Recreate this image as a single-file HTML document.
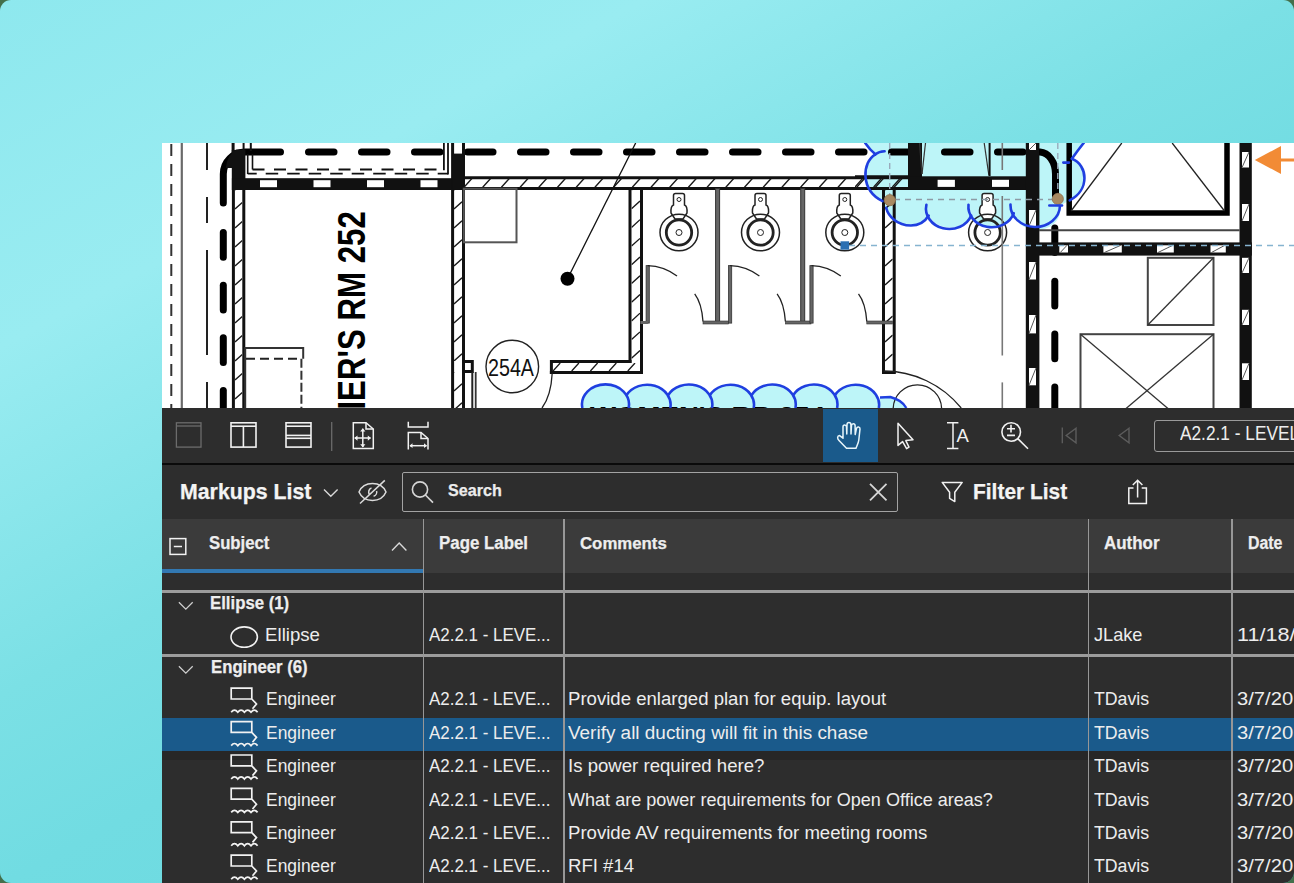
<!DOCTYPE html>
<html><head><meta charset="utf-8">
<style>
html,body{margin:0;padding:0;width:1294px;height:883px;overflow:hidden;background:#436f4b;}
*{box-sizing:border-box;}
body{font-family:"Liberation Sans",sans-serif;color:#f2f2f2;}
#bg{position:absolute;left:0;top:0;width:1294px;height:883px;border-radius:11px;overflow:hidden;
 background:linear-gradient(151.7deg,#8ee8ee 0%,#99ecf1 22%,#7be0e5 44%,#71dce2 56%,#62d5dc 100%);}
.a{position:absolute;}
#draw{left:162px;top:143px;width:1132px;height:265px;background:#fff;overflow:hidden;}
#tb{left:162px;top:408px;width:1132px;height:55px;background:#2d2d2d;}
#tbl{left:162px;top:462.7px;width:1132px;height:2.3px;background:#0a0a0a;}
#panel{left:162px;top:465px;width:1132px;height:418px;background:#2d2d2d;}
.t{position:absolute;white-space:nowrap;line-height:1;}
</style></head><body>
<div id="bg">
<div class="a" id="draw"><svg style="position:absolute;left:-162px;top:-143px" width="1294" height="883" viewBox="0 0 1294 883"><path d="M865.2 143 L1083.7 143 Q1078 150 1071.9 158.8 C1088 165 1090 190 1069.7 200.3 L1060 205.7 A23.3 20.5 0 0 1 1013.8 213.2 A23.3 20.5 0 0 1 971.2 215.5 A23.3 20.5 0 0 1 928.7 215.5 C926 220 921 225.5 910.9 225.5 C897 225.5 886 212 882.5 201.2 C860 190 862 162 875.4 154.3 Z" fill="#bdf5f8"/><rect x="582" y="400" width="300" height="10" fill="#bdf5f8"/><ellipse cx="605.5" cy="404.5" rx="23.5" ry="20" fill="#bdf5f8"/><ellipse cx="647.2" cy="404.5" rx="23.5" ry="20" fill="#bdf5f8"/><ellipse cx="688.9" cy="404.5" rx="23.5" ry="20" fill="#bdf5f8"/><ellipse cx="730.6" cy="404.5" rx="23.5" ry="20" fill="#bdf5f8"/><ellipse cx="772.3" cy="404.5" rx="23.5" ry="20" fill="#bdf5f8"/><ellipse cx="814.0" cy="404.5" rx="23.5" ry="20" fill="#bdf5f8"/><ellipse cx="855.7" cy="404.5" rx="23.5" ry="20" fill="#bdf5f8"/><path d="M880 397.5 L890.3 397 Q902 400 906.3 408 L880 408 Z" fill="#bdf5f8"/><line x1="171.3" y1="143.0" x2="171.3" y2="408.0" stroke="#333" stroke-width="2" stroke-dasharray="12 8" stroke-dashoffset="-1"/><line x1="181.8" y1="143.0" x2="181.8" y2="408.0" stroke="#6a6a6a" stroke-width="2.2" /><line x1="207.0" y1="143.0" x2="207.0" y2="170.0" stroke="#222" stroke-width="2" /><line x1="207.0" y1="197.0" x2="207.0" y2="223.0" stroke="#222" stroke-width="2" /><line x1="207.0" y1="250.0" x2="207.0" y2="355.0" stroke="#222" stroke-width="2" /><line x1="207.0" y1="382.0" x2="207.0" y2="408.0" stroke="#222" stroke-width="2" /><line x1="223.3" y1="232.5" x2="223.3" y2="257.2" stroke="#000" stroke-width="7" stroke-linecap="round"/><line x1="223.3" y1="285.2" x2="223.3" y2="309.9" stroke="#000" stroke-width="7" stroke-linecap="round"/><line x1="223.3" y1="337.8" x2="223.3" y2="362.5" stroke="#000" stroke-width="7" stroke-linecap="round"/><line x1="223.3" y1="390.5" x2="223.3" y2="415.2" stroke="#000" stroke-width="7" stroke-linecap="round"/><path d="M223.3 203 V174 A22 22 0 0 1 245.3 152 H280.5" stroke="#000" stroke-width="7" fill="none" stroke-linecap="round"/><line x1="308.5" y1="152.0" x2="334.0" y2="152.0" stroke="#000" stroke-width="7" stroke-linecap="round"/><line x1="361.5" y1="152.0" x2="387.0" y2="152.0" stroke="#000" stroke-width="7" stroke-linecap="round"/><line x1="414.5" y1="152.0" x2="440.0" y2="152.0" stroke="#000" stroke-width="7" stroke-linecap="round"/><line x1="467.5" y1="152.0" x2="493.0" y2="152.0" stroke="#000" stroke-width="7" stroke-linecap="round"/><line x1="520.5" y1="152.0" x2="546.0" y2="152.0" stroke="#000" stroke-width="7" stroke-linecap="round"/><line x1="573.5" y1="152.0" x2="599.0" y2="152.0" stroke="#000" stroke-width="7" stroke-linecap="round"/><line x1="626.5" y1="152.0" x2="652.0" y2="152.0" stroke="#000" stroke-width="7" stroke-linecap="round"/><line x1="679.5" y1="152.0" x2="705.0" y2="152.0" stroke="#000" stroke-width="7" stroke-linecap="round"/><line x1="732.5" y1="152.0" x2="758.0" y2="152.0" stroke="#000" stroke-width="7" stroke-linecap="round"/><line x1="785.5" y1="152.0" x2="811.0" y2="152.0" stroke="#000" stroke-width="7" stroke-linecap="round"/><line x1="838.5" y1="152.0" x2="864.0" y2="152.0" stroke="#000" stroke-width="7" stroke-linecap="round"/><line x1="891.5" y1="152.0" x2="917.0" y2="152.0" stroke="#000" stroke-width="7" stroke-linecap="round"/><line x1="944.5" y1="152.0" x2="970.0" y2="152.0" stroke="#000" stroke-width="7" stroke-linecap="round"/><line x1="997.5" y1="152.0" x2="1023.0" y2="152.0" stroke="#000" stroke-width="7" stroke-linecap="round"/><rect x="231.9" y="150.0" width="13.5" height="40.0" fill="#111"/><line x1="233.4" y1="150.0" x2="233.4" y2="408.0" stroke="#111" stroke-width="3" /><line x1="243.8" y1="186.0" x2="243.8" y2="408.0" stroke="#111" stroke-width="3" /><clipPath id="h38"><rect x="235.0" y="190.0" width="7.3" height="218.0"/></clipPath><path d="M235.0 190.0 L242.3 183.4 M235.0 209.0 L242.3 202.4 M235.0 228.0 L242.3 221.4 M235.0 247.0 L242.3 240.4 M235.0 266.0 L242.3 259.4 M235.0 285.0 L242.3 278.4 M235.0 304.0 L242.3 297.4 M235.0 323.0 L242.3 316.4 M235.0 342.0 L242.3 335.4 M235.0 361.0 L242.3 354.4 M235.0 380.0 L242.3 373.4 M235.0 399.0 L242.3 392.4" stroke="#1a1a1a" stroke-width="1.35" fill="none" clip-path="url(#h38)"/><rect x="231.9" y="178.2" width="232.0" height="11.8" fill="#111"/><rect x="260.0" y="180.2" width="17.0" height="7.0" fill="#fff"/><rect x="313.5" y="180.2" width="17.0" height="7.0" fill="#fff"/><rect x="367.0" y="180.2" width="17.0" height="7.0" fill="#fff"/><rect x="420.5" y="180.2" width="17.0" height="7.0" fill="#fff"/><line x1="247.7" y1="154.0" x2="247.7" y2="174.0" stroke="#111" stroke-width="1.6" /><line x1="252.5" y1="154.0" x2="252.5" y2="169.5" stroke="#111" stroke-width="1.6" /><line x1="233.1" y1="143.0" x2="233.1" y2="153.0" stroke="#111" stroke-width="3" /><line x1="243.6" y1="143.0" x2="243.6" y2="151.0" stroke="#111" stroke-width="2" /><line x1="250.8" y1="143.0" x2="250.8" y2="151.0" stroke="#111" stroke-width="2" /><path d="M225.8 168 Q226.5 156 236 149.5 L244 149.5 L244 168 Z" fill="#111"/><line x1="252.5" y1="169.5" x2="444.0" y2="169.5" stroke="#111" stroke-width="1.8" stroke-dasharray="12 9.5"/><line x1="247.7" y1="173.6" x2="448.0" y2="173.6" stroke="#111" stroke-width="1.8" stroke-dasharray="12.5 9" stroke-dashoffset="3.5"/><line x1="443.9" y1="143.0" x2="443.9" y2="170.3" stroke="#111" stroke-width="1.8" /><line x1="448.0" y1="143.0" x2="448.0" y2="174.4" stroke="#111" stroke-width="1.8" /><line x1="452.6" y1="143.0" x2="452.6" y2="408.0" stroke="#111" stroke-width="3" /><line x1="463.5" y1="143.0" x2="463.5" y2="408.0" stroke="#111" stroke-width="3" /><rect x="452.6" y="153.6" width="11.0" height="36.0" fill="#111"/><clipPath id="h58"><rect x="454.0" y="190.0" width="8.0" height="171.0"/></clipPath><path d="M454.0 190.0 L462.0 182.8 M454.0 209.0 L462.0 201.8 M454.0 228.0 L462.0 220.8 M454.0 247.0 L462.0 239.8 M454.0 266.0 L462.0 258.8 M454.0 285.0 L462.0 277.8 M454.0 304.0 L462.0 296.8 M454.0 323.0 L462.0 315.8 M454.0 342.0 L462.0 334.8 M454.0 361.0 L462.0 353.8" stroke="#1a1a1a" stroke-width="1.35" fill="none" clip-path="url(#h58)"/><clipPath id="h60"><rect x="454.0" y="372.0" width="8.0" height="36.0"/></clipPath><path d="M454.0 372.0 L462.0 364.8 M454.0 391.0 L462.0 383.8 M454.0 410.0 L462.0 402.8" stroke="#1a1a1a" stroke-width="1.35" fill="none" clip-path="url(#h60)"/><line x1="463.5" y1="177.7" x2="908.0" y2="177.7" stroke="#111" stroke-width="3" /><line x1="463.5" y1="188.6" x2="1026.0" y2="188.6" stroke="#111" stroke-width="3" /><clipPath id="h64"><rect x="464.0" y="178.5" width="444.0" height="8.8"/></clipPath><path d="M464.0 187.3 L471.9 178.5 M482.7 187.3 L490.6 178.5 M501.4 187.3 L509.3 178.5 M520.1 187.3 L528.0 178.5 M538.8 187.3 L546.7 178.5 M557.5 187.3 L565.4 178.5 M576.2 187.3 L584.1 178.5 M594.9 187.3 L602.8 178.5 M613.6 187.3 L621.5 178.5 M632.3 187.3 L640.2 178.5 M651.0 187.3 L658.9 178.5 M669.7 187.3 L677.6 178.5 M688.4 187.3 L696.3 178.5 M707.1 187.3 L715.0 178.5 M725.8 187.3 L733.7 178.5 M744.5 187.3 L752.4 178.5 M763.2 187.3 L771.1 178.5 M781.9 187.3 L789.8 178.5 M800.6 187.3 L808.5 178.5 M819.3 187.3 L827.2 178.5 M838.0 187.3 L845.9 178.5 M856.7 187.3 L864.6 178.5 M875.4 187.3 L883.3 178.5 M894.1 187.3 L902.0 178.5 M912.8 187.3 L920.7 178.5" stroke="#1a1a1a" stroke-width="1.35" fill="none" clip-path="url(#h64)"/><rect x="463.8" y="188.7" width="52.7" height="53.6" fill="none" stroke="#555" stroke-width="2"/><line x1="635.7" y1="143.0" x2="567.5" y2="278.8" stroke="#111" stroke-width="1.3" /><circle cx="567.5" cy="278.8" r="7" fill="#000"/><line x1="630.0" y1="188.0" x2="630.0" y2="362.9" stroke="#111" stroke-width="3" /><line x1="641.5" y1="188.0" x2="641.5" y2="374.0" stroke="#111" stroke-width="3" /><clipPath id="h71"><rect x="631.5" y="190.0" width="8.5" height="171.0"/></clipPath><path d="M631.5 190.0 L640.0 182.3 M631.5 208.7 L640.0 201.0 M631.5 227.4 L640.0 219.7 M631.5 246.1 L640.0 238.4 M631.5 264.8 L640.0 257.1 M631.5 283.5 L640.0 275.8 M631.5 302.2 L640.0 294.5 M631.5 320.9 L640.0 313.2 M631.5 339.6 L640.0 331.9 M631.5 358.3 L640.0 350.6" stroke="#1a1a1a" stroke-width="1.35" fill="none" clip-path="url(#h71)"/><line x1="551.4" y1="361.4" x2="631.5" y2="361.4" stroke="#111" stroke-width="3" /><line x1="549.9" y1="372.5" x2="643.0" y2="372.5" stroke="#111" stroke-width="3" /><line x1="551.4" y1="360.0" x2="551.4" y2="374.0" stroke="#111" stroke-width="3" /><clipPath id="h76"><rect x="553.0" y="363.0" width="87.0" height="8.0"/></clipPath><path d="M553.0 371.0 L560.2 363.0 M571.7 371.0 L578.9 363.0 M590.4 371.0 L597.6 363.0 M609.1 371.0 L616.3 363.0 M627.8 371.0 L635.0 363.0 M646.5 371.0 L653.7 363.0" stroke="#1a1a1a" stroke-width="1.35" fill="none" clip-path="url(#h76)"/><path d="M463.8 361.4 H472.3 V371.6 H463.8" fill="none" stroke="#111" stroke-width="3"/><line x1="472.3" y1="372.0" x2="472.3" y2="408.0" stroke="#222" stroke-width="2" /><line x1="475.7" y1="372.0" x2="475.7" y2="408.0" stroke="#333" stroke-width="1.8" /><path d="M552.2 373.3 Q551 396 542 408" fill="none" stroke="#222" stroke-width="1.3"/><circle cx="512.3" cy="366.5" r="26.3" fill="none" stroke="#222" stroke-width="1.4"/><text x="511" y="375.9" text-anchor="middle" font-family="Liberation Sans" font-size="23.5" fill="#111" textLength="46" lengthAdjust="spacingAndGlyphs">254A</text><path d="M245.2 408 V347.9 H303.2 V358.8" fill="none" stroke="#333" stroke-width="2"/><line x1="246.0" y1="358.8" x2="301.4" y2="358.8" stroke="#222" stroke-width="2" stroke-dasharray="9 5"/><line x1="301.4" y1="358.8" x2="301.4" y2="408.0" stroke="#333" stroke-width="2" stroke-dasharray="9 3"/><text transform="translate(364.9 409.6) rotate(-90) scale(0.791 1)" font-family="Liberation Sans" font-weight="bold" font-size="39.5" fill="#000">IER'S RM 252</text><line x1="883.5" y1="188.0" x2="883.5" y2="373.5" stroke="#111" stroke-width="3" /><line x1="894.2" y1="188.0" x2="894.2" y2="373.5" stroke="#111" stroke-width="3" /><line x1="882.0" y1="372.5" x2="895.7" y2="372.5" stroke="#111" stroke-width="3" /><clipPath id="h91"><rect x="885.0" y="190.0" width="7.7" height="181.0"/></clipPath><path d="M885.0 190.0 L892.7 183.1 M885.0 209.0 L892.7 202.1 M885.0 228.0 L892.7 221.1 M885.0 247.0 L892.7 240.1 M885.0 266.0 L892.7 259.1 M885.0 285.0 L892.7 278.1 M885.0 304.0 L892.7 297.1 M885.0 323.0 L892.7 316.1 M885.0 342.0 L892.7 335.1 M885.0 361.0 L892.7 354.1" stroke="#1a1a1a" stroke-width="1.35" fill="none" clip-path="url(#h91)"/><rect x="715.6" y="188.5" width="4" height="134" fill="#666" stroke="#333" stroke-width="1"/><rect x="800.7" y="188.5" width="4" height="134" fill="#666" stroke="#333" stroke-width="1"/><rect x="646.1" y="265.6" width="3.2" height="57.5" fill="#666" stroke="#333" stroke-width="0.8"/><path d="M647.7 265.6 Q663.7 266 677.0 276" fill="none" stroke="#222" stroke-width="1.3"/><path d="M694.7 293.8 Q701.7 303 703.0 321.5" fill="none" stroke="#222" stroke-width="1.3"/><rect x="703.0" y="321" width="25.6" height="3" fill="#666" stroke="#333" stroke-width="0.6"/><rect x="728.5" y="265.6" width="3.2" height="57.5" fill="#666" stroke="#333" stroke-width="0.8"/><path d="M730.1 265.6 Q746.1 266 759.4 276" fill="none" stroke="#222" stroke-width="1.3"/><path d="M777.1 293.8 Q784.1 303 785.4 321.5" fill="none" stroke="#222" stroke-width="1.3"/><rect x="785.4" y="321" width="25.6" height="3" fill="#666" stroke="#333" stroke-width="0.6"/><rect x="809.9" y="265.6" width="3.2" height="57.5" fill="#666" stroke="#333" stroke-width="0.8"/><path d="M811.5 265.6 Q827.5 266 840.8 276" fill="none" stroke="#222" stroke-width="1.3"/><path d="M858.5 293.8 Q865.5 303 866.8 321.5" fill="none" stroke="#222" stroke-width="1.3"/><rect x="866.8" y="321" width="25.6" height="3" fill="#666" stroke="#333" stroke-width="0.6"/><rect x="640.4" y="321" width="7.5" height="3" fill="#666"/><g fill="none" stroke="#222"><path d="M673.5 205 V195.5 Q673.5 193.6 675.5 193.6 H682.5 Q684.5 193.6 684.5 195.5 V205 Q687.5 206 687.0 213 L683.0 219 H675.0 L671.0 213 Q670.5 206 673.5 205 Z" stroke-width="1.5" fill="#fff"/><circle cx="679.0" cy="199.5" r="2" stroke-width="1"/><ellipse cx="679.0" cy="232.5" rx="19" ry="18.3" stroke-width="1.5"/><circle cx="679.0" cy="232.5" r="12.7" stroke-width="2.8"/><circle cx="679.0" cy="232.5" r="3" stroke-width="1"/></g><g fill="none" stroke="#222"><path d="M755.0 205 V195.5 Q755.0 193.6 757.0 193.6 H764.0 Q766.0 193.6 766.0 195.5 V205 Q769.0 206 768.5 213 L764.5 219 H756.5 L752.5 213 Q752.0 206 755.0 205 Z" stroke-width="1.5" fill="#fff"/><circle cx="760.5" cy="199.5" r="2" stroke-width="1"/><ellipse cx="760.5" cy="232.5" rx="19" ry="18.3" stroke-width="1.5"/><circle cx="760.5" cy="232.5" r="12.7" stroke-width="2.8"/><circle cx="760.5" cy="232.5" r="3" stroke-width="1"/></g><g fill="none" stroke="#222"><path d="M839.3 205 V195.5 Q839.3 193.6 841.3 193.6 H848.3 Q850.3 193.6 850.3 195.5 V205 Q853.3 206 852.8 213 L848.8 219 H840.8 L836.8 213 Q836.3 206 839.3 205 Z" stroke-width="1.5" fill="#fff"/><circle cx="844.8" cy="199.5" r="2" stroke-width="1"/><ellipse cx="844.8" cy="232.5" rx="19" ry="18.3" stroke-width="1.5"/><circle cx="844.8" cy="232.5" r="12.7" stroke-width="2.8"/><circle cx="844.8" cy="232.5" r="3" stroke-width="1"/></g><g fill="none" stroke="#222"><path d="M982.1 205 V195.5 Q982.1 193.6 984.1 193.6 H991.1 Q993.1 193.6 993.1 195.5 V205 Q996.1 206 995.6 213 L991.6 219 H983.6 L979.6 213 Q979.1 206 982.1 205 Z" stroke-width="1.5" fill="#fff"/><circle cx="987.6" cy="199.5" r="2" stroke-width="1"/><ellipse cx="987.6" cy="232.5" rx="19" ry="18.3" stroke-width="1.5"/><circle cx="987.6" cy="232.5" r="12.7" stroke-width="2.8"/><circle cx="987.6" cy="232.5" r="3" stroke-width="1"/></g><rect x="908.0" y="143.0" width="14.0" height="47.0" fill="#111"/><line x1="919.5" y1="143.0" x2="922.0" y2="174.0" stroke="#333" stroke-width="1.2" /><line x1="984.2" y1="143.0" x2="988.9" y2="175.5" stroke="#333" stroke-width="1.2" /><line x1="989.6" y1="143.0" x2="989.6" y2="176.0" stroke="#111" stroke-width="2" /><line x1="925.5" y1="143.0" x2="922.0" y2="174.0" stroke="#333" stroke-width="1.2" /><line x1="855.0" y1="176.8" x2="908.0" y2="176.8" stroke="#111" stroke-width="3" /><clipPath id="h118"><rect x="855.0" y="178.3" width="53.0" height="8.7"/></clipPath><path d="M855.0 187.0 L862.8 178.3 M873.7 187.0 L881.5 178.3 M892.4 187.0 L900.2 178.3 M911.1 187.0 L918.9 178.3" stroke="#1a1a1a" stroke-width="1.35" fill="none" clip-path="url(#h118)"/><rect x="908.0" y="176.3" width="118.0" height="13.5" fill="#111"/><rect x="937.6" y="179.8" width="17.3" height="7.1" fill="#fff"/><rect x="992.0" y="179.8" width="17.0" height="7.1" fill="#fff"/><line x1="1002.3" y1="143.0" x2="1002.3" y2="170.0" stroke="#777" stroke-width="1.6" /><line x1="1002.3" y1="196.0" x2="1002.3" y2="355.5" stroke="#777" stroke-width="1.6" /><line x1="1002.3" y1="382.4" x2="1002.3" y2="408.0" stroke="#777" stroke-width="1.6" /><path d="M883.5 371 A100 100 0 0 1 961.2 408" fill="none" stroke="#222" stroke-width="1.3"/><circle cx="917.4" cy="409" r="24.2" fill="none" stroke="#222" stroke-width="1.3"/><rect x="1025.8" y="143.0" width="13.6" height="265.0" fill="#111"/><rect x="1029.0" y="143.0" width="7.0" height="7.0" fill="#fff"/><line x1="1029.0" y1="150.0" x2="1036.0" y2="143.0" stroke="#555" stroke-width="1" /><rect x="1029.0" y="210.0" width="7.0" height="16.0" fill="#fff"/><line x1="1029.0" y1="226.0" x2="1036.0" y2="210.0" stroke="#555" stroke-width="1" /><rect x="1029.0" y="262.0" width="7.0" height="17.5" fill="#fff"/><line x1="1029.0" y1="279.5" x2="1036.0" y2="262.0" stroke="#555" stroke-width="1" /><rect x="1029.0" y="315.0" width="7.0" height="18.4" fill="#fff"/><line x1="1029.0" y1="333.4" x2="1036.0" y2="315.0" stroke="#555" stroke-width="1" /><rect x="1029.0" y="368.0" width="7.0" height="17.3" fill="#fff"/><line x1="1029.0" y1="385.3" x2="1036.0" y2="368.0" stroke="#555" stroke-width="1" /><path d="M1039 152 H1040 A16 22 0 0 1 1055.5 174 V197" stroke="#000" stroke-width="7" fill="none"/><line x1="1054.8" y1="227.9" x2="1054.8" y2="252.6" stroke="#000" stroke-width="7" stroke-linecap="round"/><line x1="1054.8" y1="281.2" x2="1054.8" y2="305.9" stroke="#000" stroke-width="7" stroke-linecap="round"/><line x1="1054.8" y1="334.0" x2="1054.8" y2="358.7" stroke="#000" stroke-width="7" stroke-linecap="round"/><line x1="1054.8" y1="386.9" x2="1054.8" y2="411.6" stroke="#000" stroke-width="7" stroke-linecap="round"/><rect x="1039.0" y="242.4" width="212.8" height="13.2" fill="#111"/><rect x="1059.3" y="245.3" width="8.7" height="7.2" fill="#fff"/><line x1="1060.3" y1="252.5" x2="1067.0" y2="245.3" stroke="#555" stroke-width="1" /><rect x="1103.4" y="245.3" width="18.4" height="7.2" fill="#fff"/><line x1="1104.4" y1="252.5" x2="1120.8" y2="245.3" stroke="#555" stroke-width="1" /><rect x="1157.0" y="245.3" width="16.8" height="7.2" fill="#fff"/><line x1="1158.0" y1="252.5" x2="1172.8" y2="245.3" stroke="#555" stroke-width="1" /><rect x="1210.5" y="245.3" width="15.3" height="7.2" fill="#fff"/><line x1="1211.5" y1="252.5" x2="1224.8" y2="245.3" stroke="#555" stroke-width="1" /><path d="M1069.2 140 V213 H1227 V140" fill="none" stroke="#000" stroke-width="5.5"/><line x1="1071.0" y1="211.0" x2="1121.8" y2="143.0" stroke="#222" stroke-width="1.3" /><line x1="1172.2" y1="143.0" x2="1224.5" y2="211.0" stroke="#222" stroke-width="1.3" /><line x1="1039.0" y1="230.2" x2="1239.5" y2="230.2" stroke="#444" stroke-width="2" /><rect x="1239.5" y="143.0" width="12.3" height="265.0" fill="#111"/><rect x="1242.0" y="152.0" width="7.0" height="15.5" fill="#fff"/><line x1="1242.0" y1="167.5" x2="1249.0" y2="152.0" stroke="#555" stroke-width="1" /><rect x="1242.0" y="204.0" width="7.0" height="17.0" fill="#fff"/><line x1="1242.0" y1="221.0" x2="1249.0" y2="204.0" stroke="#555" stroke-width="1" /><rect x="1242.0" y="257.8" width="7.0" height="15.2" fill="#fff"/><line x1="1242.0" y1="273.0" x2="1249.0" y2="257.8" stroke="#555" stroke-width="1" /><rect x="1242.0" y="309.8" width="7.0" height="15.2" fill="#fff"/><line x1="1242.0" y1="325.0" x2="1249.0" y2="309.8" stroke="#555" stroke-width="1" /><rect x="1242.0" y="363.3" width="7.0" height="16.7" fill="#fff"/><line x1="1242.0" y1="380.0" x2="1249.0" y2="363.3" stroke="#555" stroke-width="1" /><rect x="1147.8" y="257.8" width="65.7" height="67.2" fill="none" stroke="#444" stroke-width="2"/><line x1="1147.8" y1="325.0" x2="1213.5" y2="257.8" stroke="#333" stroke-width="1.3" /><rect x="1080.5" y="334.2" width="133" height="113" fill="none" stroke="#444" stroke-width="2"/><line x1="1080.5" y1="334.2" x2="1213.5" y2="447.2" stroke="#333" stroke-width="1.3" /><line x1="1213.5" y1="334.2" x2="1080.5" y2="447.2" stroke="#333" stroke-width="1.3" /><path d="M1254.8 160 L1281 146 L1281 174 Z" fill="#f28b35"/><line x1="1278.0" y1="160.0" x2="1294.0" y2="160.0" stroke="#f28b35" stroke-width="3" /><line x1="894.0" y1="199.5" x2="1052.0" y2="199.5" stroke="#8e9aa5" stroke-width="1.6" stroke-dasharray="6 5"/><line x1="849.0" y1="245.5" x2="1294.0" y2="245.5" stroke="#86b4d0" stroke-width="1.4" stroke-dasharray="6 5"/><line x1="889.7" y1="143.0" x2="889.7" y2="200.0" stroke="#9ab" stroke-width="1.4" stroke-dasharray="6 4"/><line x1="1057.8" y1="143.0" x2="1057.8" y2="199.0" stroke="#9ab" stroke-width="1.4" stroke-dasharray="6 4"/><rect x="840.5" y="241.3" width="8.6" height="8.4" fill="#2a6fb2"/><text x="590" y="425" font-family="Liberation Sans" font-weight="bold" font-size="26" fill="#000" textLength="235" lengthAdjust="spacingAndGlyphs">WOMEN'S RR 254</text><circle cx="889.8" cy="200.2" r="5.6" fill="#a88a62" stroke="#8a6f4d" stroke-width="0.8"/><circle cx="1057.8" cy="198.9" r="5.6" fill="#a88a62" stroke="#8a6f4d" stroke-width="0.8"/><g fill="none" stroke="#1f3fe0" stroke-width="2.6" stroke-linecap="round"><path d="M884.6 151.2 Q879 151.5 875.4 154.3"/><path d="M865.2 143 Q870 150 875.4 154.3"/><path d="M875.4 154.3 C862 162 860 190 882.5 201.2"/><path d="M886.2 207.8 C888 216 897 225.5 910.9 225.5 C921 225.5 926 220 928.7 215.5"/><path d="M926.4 204.7 A23.3 20.5 0 0 0 971.2 215.5"/><path d="M968.5 204.7 A23.3 20.5 0 0 0 1013.8 213.2"/><path d="M1010.5 204.6 A23.3 20.5 0 0 0 1060 205.7"/><path d="M1049.3 205.5 H1062"/><path d="M1069.7 200.3 C1090 190 1088 165 1071.9 158.8"/><path d="M1071.9 158.8 Q1078 150 1083.7 143"/><path d="M1063.3 162.6 H1069"/></g><path d="M582.4 408 A23.5 20 0 1 1 628.6 408" fill="none" stroke="#1f3fe0" stroke-width="2.6"/><path d="M626.4 395.3 A23.5 20 0 0 1 670.3 408" fill="none" stroke="#1f3fe0" stroke-width="2.6"/><path d="M668.0 395.3 A23.5 20 0 0 1 712.0 408" fill="none" stroke="#1f3fe0" stroke-width="2.6"/><path d="M709.8 395.3 A23.5 20 0 0 1 753.7 408" fill="none" stroke="#1f3fe0" stroke-width="2.6"/><path d="M751.4 395.3 A23.5 20 0 0 1 795.4 408" fill="none" stroke="#1f3fe0" stroke-width="2.6"/><path d="M793.1 395.3 A23.5 20 0 0 1 837.1 408" fill="none" stroke="#1f3fe0" stroke-width="2.6"/><path d="M834.9 395.3 A23.5 20 0 0 1 878.8 408" fill="none" stroke="#1f3fe0" stroke-width="2.6"/><path d="M880 397.5 L890.3 397 Q902 400 906.3 408" fill="none" stroke="#1f3fe0" stroke-width="2.4"/></svg></div>
<div class="a" id="tb"></div>
<div class="a" id="tbl"></div>
<div class="a" id="panel"></div>
<div class="a" style="left:822.6px;top:408.5px;width:55px;height:53px;background:#1a5a8b"></div>
<div class="a" style="left:1153.9px;top:419.5px;width:160px;height:32.8px;border:1.6px solid #9a9a9a;border-radius:3px"></div>
<div class="t" style="left:1180.10px;top:423.64px;font-size:19.33px;color:#ededed;transform:scaleX(0.8935);transform-origin:0 0">A2.2.1 - LEVEL</div>
<div class="t" style="left:179.90px;top:480.58px;font-size:21.76px;font-weight:bold;-webkit-text-stroke:0.25px currentColor;color:#f4f4f4;transform:scaleX(0.9793);transform-origin:0 0">Markups List</div>
<div class="a" style="left:402.3px;top:472.3px;width:495.5px;height:39.8px;border:1.7px solid #a3a3a3;border-radius:2px"></div>
<div class="t" style="left:447.90px;top:482.86px;font-size:16.58px;font-weight:bold;-webkit-text-stroke:0.25px currentColor;color:#ececec;transform:scaleX(0.9729);transform-origin:0 0">Search</div>
<div class="t" style="left:973.40px;top:480.99px;font-size:21.63px;font-weight:bold;-webkit-text-stroke:0.25px currentColor;color:#f4f4f4;transform:scaleX(0.9679);transform-origin:0 0">Filter List</div>
<div class="a" style="left:162px;top:519.3px;width:1132px;height:53.5px;background:#3b3b3b"></div>
<div class="a" style="left:162px;top:569px;width:261.5px;height:4px;background:#3278b2"></div>
<div class="a" style="left:162px;top:590.3px;width:1132px;height:2.7px;background:#9c9c9c"></div>
<div class="a" style="left:162px;top:654.2px;width:1132px;height:2.7px;background:#9c9c9c"></div>
<div class="t" style="left:209.30px;top:534.59px;font-size:17.61px;font-weight:bold;-webkit-text-stroke:0.25px currentColor;color:#eeeeee;transform:scaleX(0.9484);transform-origin:0 0">Subject</div>
<div class="t" style="left:438.90px;top:534.90px;font-size:17.48px;font-weight:bold;-webkit-text-stroke:0.25px currentColor;color:#eeeeee;transform:scaleX(0.9655);transform-origin:0 0">Page Label</div>
<div class="t" style="left:579.70px;top:535.33px;font-size:17.21px;font-weight:bold;-webkit-text-stroke:0.25px currentColor;color:#eeeeee;transform:scaleX(0.9767);transform-origin:0 0">Comments</div>
<div class="t" style="left:1103.70px;top:534.90px;font-size:17.48px;font-weight:bold;-webkit-text-stroke:0.25px currentColor;color:#eeeeee;transform:scaleX(0.9696);transform-origin:0 0">Author</div>
<div class="t" style="left:1248.10px;top:534.70px;font-size:17.48px;font-weight:bold;-webkit-text-stroke:0.25px currentColor;color:#eeeeee;transform:scaleX(0.9096);transform-origin:0 0">Date</div>
<div class="t" style="left:210.10px;top:593.67px;font-size:18.46px;font-weight:bold;-webkit-text-stroke:0.25px currentColor;color:#eeeeee;transform:scaleX(0.9092);transform-origin:0 0">Ellipse (1)</div>
<div class="t" style="left:265.10px;top:625.86px;font-size:18.60px;color:#ededed;transform:scaleX(1.0000);transform-origin:0 0">Ellipse</div>
<div class="t" style="left:428.50px;top:625.48px;font-size:19.04px;color:#ededed;transform:scaleX(0.8892);transform-origin:0 0">A2.2.1 - LEVE...</div>
<div class="t" style="left:1093.60px;top:625.48px;font-size:19.04px;color:#ededed;transform:scaleX(0.9540);transform-origin:0 0">JLake</div>
<div class="t" style="left:1237.20px;top:625.48px;font-size:19.04px;color:#ededed;transform:scaleX(1.1337);transform-origin:0 0">11/18/</div>
<div class="t" style="left:211.00px;top:659.06px;font-size:17.77px;font-weight:bold;-webkit-text-stroke:0.25px currentColor;color:#eeeeee;transform:scaleX(0.9416);transform-origin:0 0">Engineer (6)</div>
<div class="t" style="left:265.55px;top:689.36px;font-size:19.19px;color:#ededed;transform:scaleX(0.9090);transform-origin:0 0">Engineer</div>
<div class="t" style="left:428.50px;top:689.36px;font-size:19.19px;color:#ededed;transform:scaleX(0.8825);transform-origin:0 0">A2.2.1 - LEVE...</div>
<div class="t" style="left:568.00px;top:689.36px;font-size:19.19px;color:#ededed;transform:scaleX(0.9685);transform-origin:0 0">Provide enlarged plan for equip. layout</div>
<div class="t" style="left:1093.60px;top:689.36px;font-size:19.19px;color:#ededed;transform:scaleX(0.9234);transform-origin:0 0">TDavis</div>
<div class="t" style="left:1237.20px;top:689.36px;font-size:19.19px;color:#ededed;transform:scaleX(1.0518);transform-origin:0 0">3/7/20</div>
<div class="a" style="left:162px;top:718.0px;width:1132px;height:33.4px;background:#1a5a8b"></div>
<div class="a" style="left:162px;top:751.4px;width:1132px;height:9px;background:#272727"></div>
<div class="t" style="left:265.55px;top:722.76px;font-size:19.19px;color:#ededed;transform:scaleX(0.9090);transform-origin:0 0">Engineer</div>
<div class="t" style="left:428.50px;top:722.76px;font-size:19.19px;color:#ededed;transform:scaleX(0.8825);transform-origin:0 0">A2.2.1 - LEVE...</div>
<div class="t" style="left:568.00px;top:722.76px;font-size:19.19px;color:#ededed;transform:scaleX(0.9868);transform-origin:0 0">Verify all ducting will fit in this chase</div>
<div class="t" style="left:1093.60px;top:722.76px;font-size:19.19px;color:#ededed;transform:scaleX(0.9234);transform-origin:0 0">TDavis</div>
<div class="t" style="left:1237.20px;top:722.76px;font-size:19.19px;color:#ededed;transform:scaleX(1.0518);transform-origin:0 0">3/7/20</div>
<div class="t" style="left:265.55px;top:756.16px;font-size:19.19px;color:#ededed;transform:scaleX(0.9090);transform-origin:0 0">Engineer</div>
<div class="t" style="left:428.50px;top:756.16px;font-size:19.19px;color:#ededed;transform:scaleX(0.8825);transform-origin:0 0">A2.2.1 - LEVE...</div>
<div class="t" style="left:568.00px;top:756.66px;font-size:18.60px;color:#ededed;transform:scaleX(1.0000);transform-origin:0 0">Is power required here?</div>
<div class="t" style="left:1093.60px;top:756.16px;font-size:19.19px;color:#ededed;transform:scaleX(0.9234);transform-origin:0 0">TDavis</div>
<div class="t" style="left:1237.20px;top:756.16px;font-size:19.19px;color:#ededed;transform:scaleX(1.0518);transform-origin:0 0">3/7/20</div>
<div class="t" style="left:265.55px;top:789.56px;font-size:19.19px;color:#ededed;transform:scaleX(0.9090);transform-origin:0 0">Engineer</div>
<div class="t" style="left:428.50px;top:789.56px;font-size:19.19px;color:#ededed;transform:scaleX(0.8825);transform-origin:0 0">A2.2.1 - LEVE...</div>
<div class="t" style="left:568.00px;top:789.56px;font-size:19.19px;color:#ededed;transform:scaleX(0.9404);transform-origin:0 0">What are power requirements for Open Office areas?</div>
<div class="t" style="left:1093.60px;top:789.56px;font-size:19.19px;color:#ededed;transform:scaleX(0.9234);transform-origin:0 0">TDavis</div>
<div class="t" style="left:1237.20px;top:789.56px;font-size:19.19px;color:#ededed;transform:scaleX(1.0518);transform-origin:0 0">3/7/20</div>
<div class="t" style="left:265.55px;top:822.96px;font-size:19.19px;color:#ededed;transform:scaleX(0.9090);transform-origin:0 0">Engineer</div>
<div class="t" style="left:428.50px;top:822.96px;font-size:19.19px;color:#ededed;transform:scaleX(0.8825);transform-origin:0 0">A2.2.1 - LEVE...</div>
<div class="t" style="left:568.00px;top:822.96px;font-size:19.19px;color:#ededed;transform:scaleX(0.9693);transform-origin:0 0">Provide AV requirements for meeting rooms</div>
<div class="t" style="left:1093.60px;top:822.96px;font-size:19.19px;color:#ededed;transform:scaleX(0.9234);transform-origin:0 0">TDavis</div>
<div class="t" style="left:1237.20px;top:822.96px;font-size:19.19px;color:#ededed;transform:scaleX(1.0518);transform-origin:0 0">3/7/20</div>
<div class="t" style="left:265.55px;top:856.36px;font-size:19.19px;color:#ededed;transform:scaleX(0.9090);transform-origin:0 0">Engineer</div>
<div class="t" style="left:428.50px;top:856.36px;font-size:19.19px;color:#ededed;transform:scaleX(0.8825);transform-origin:0 0">A2.2.1 - LEVE...</div>
<div class="t" style="left:568.00px;top:856.86px;font-size:18.60px;color:#ededed;transform:scaleX(1.0000);transform-origin:0 0">RFI #14</div>
<div class="t" style="left:1093.60px;top:856.36px;font-size:19.19px;color:#ededed;transform:scaleX(0.9234);transform-origin:0 0">TDavis</div>
<div class="t" style="left:1237.20px;top:856.36px;font-size:19.19px;color:#ededed;transform:scaleX(1.0518);transform-origin:0 0">3/7/20</div>
<div class="a" style="left:422.75px;top:519.3px;width:1.5px;height:364px;background:#979797"></div>
<div class="a" style="left:563.25px;top:519.3px;width:1.5px;height:364px;background:#979797"></div>
<div class="a" style="left:1087.65px;top:519.3px;width:1.5px;height:364px;background:#979797"></div>
<div class="a" style="left:1231.05px;top:519.3px;width:1.5px;height:364px;background:#979797"></div>

<svg class="a" style="left:0;top:0" width="1294" height="883" viewBox="0 0 1294 883"><g fill="none" stroke="#6c6c6c" stroke-width="1.3"><rect x="176.4" y="422.8" width="24.6" height="24.3"/><line x1="176.4" y1="426" x2="201" y2="426"/></g><g fill="none" stroke="#f2f2f2" stroke-width="1.6"><rect x="231" y="422.8" width="25" height="24.3"/><line x1="231" y1="426.2" x2="256" y2="426.2"/><line x1="243.4" y1="426.2" x2="243.4" y2="447"/></g><g fill="none" stroke="#f2f2f2" stroke-width="1.6"><rect x="286" y="422.8" width="25" height="24.3"/><line x1="286" y1="426.2" x2="311" y2="426.2"/><line x1="286" y1="435.4" x2="311" y2="435.4"/><line x1="286" y1="438.3" x2="311" y2="438.3"/></g><line x1="331.7" y1="422" x2="331.7" y2="451" stroke="#6a6a6a" stroke-width="1.3"/><g fill="none" stroke="#f2f2f2" stroke-width="1.5"><path d="M353.3 422.8 H366 L373.3 429 V448.6 H353.3 Z"/><path d="M366 422.8 V429 H373.3"/><path d="M354.8 438.1 H370.5 M362.8 428.8 V447"/></g><g fill="#f2f2f2"><path d="M354.3 438.1 l3.2 -2.6 v5.2z M371 438.1 l-3.2 -2.6 v5.2z M362.8 428.3 l-2.6 3.2 h5.2z M362.8 447.5 l-2.6 -3.2 h5.2z"/></g><g fill="none" stroke="#f2f2f2" stroke-width="1.5"><path d="M408.3 421.8 V427 H428 V421.8"/><path d="M408.3 449.5 V432.5 H421 L428 438.5 V449.5"/><path d="M421 432.5 V438.5 H428"/><path d="M410 445.7 H426.5"/></g><g fill="#f2f2f2"><path d="M409.5 445.7 l3 -2.4 v4.8z M427 445.7 l-3 -2.4 v4.8z"/></g><g fill="none" stroke="#e8f6fb" stroke-width="1.5" stroke-linejoin="round" stroke-linecap="round"><path d="M846.5 448.2 L839 440.5 C837 438.5 837.2 435.8 839.6 435.6 L843 438.2 L843 427 C843 424.4 846.3 424.4 846.5 427 L846.8 434 L847 424.6 C847.2 421.9 850.7 421.9 850.9 424.6 L851 434 L851.5 425.5 C851.8 423 855 423 855.1 425.6 L855.2 434.6 L856.5 428.4 C857.2 426.2 860.2 426.6 860 429 L858.8 440 C858.5 443 856.8 445.8 856 448.2 Z"/></g><path d="M898 423.2 L898 445.4 L902.6 441.6 L906.6 448.6 L909 447.2 L905.8 440.6 L913 439.8 Z" fill="none" stroke="#f2f2f2" stroke-width="1.5" stroke-linejoin="round"/><g fill="none" stroke="#f2f2f2" stroke-width="1.5"><path d="M947 422.8 H958.4 M947 448.6 H958.4 M953 422.8 V448.6"/></g><text x="956.5" y="441.8" font-family="Liberation Sans" font-size="18.5" fill="#f2f2f2">A</text><g fill="none" stroke="#f2f2f2" stroke-width="1.6"><circle cx="1011.2" cy="432" r="9.3"/><path d="M1017.8 438.6 L1028 448.8"/><path d="M1007 428.8 H1015 M1011 424.8 V432.6 M1007 435.4 H1015"/></g><g fill="none" stroke="#5c5c5c" stroke-width="1.4"><path d="M1062.3 427.6 V443.3"/><path d="M1076 428.2 L1066.2 435.5 L1076 442.8 Z"/><path d="M1129 428.2 L1119.2 435.5 L1129 442.8 Z"/></g><path d="M324 489.5 L330.8 496.3 L337.6 489.5" fill="none" stroke="#d8d8d8" stroke-width="1.4"/><g fill="none" stroke="#dcdcdc" stroke-width="1.5"><path d="M359 492 C362 485 368 483.6 372.5 483.6 C377 483.6 383 485 386 492 C383 499 377 500.4 372.5 500.4 C368 500.4 362 499 359 492 Z"/><path d="M369.5 494.5 A4.3 4.3 0 0 1 371.5 487.9 M373.6 496.2 A4.3 4.3 0 0 0 376.6 491"/><path d="M360 503.5 L384.8 480.4"/></g><g fill="none" stroke="#d6d6d6" stroke-width="1.6"><circle cx="420" cy="489.5" r="7.6"/><path d="M425.4 495 L433 502.6"/></g><path d="M870 483.8 L886.5 500.3 M886.5 483.8 L870 500.3" fill="none" stroke="#d6d6d6" stroke-width="1.8"/><path d="M942.2 482.4 H962.2 L954.8 492.3 V501.6 L949.6 498.4 V492.3 Z" fill="none" stroke="#f2f2f2" stroke-width="1.5" stroke-linejoin="round"/><g fill="none" stroke="#f2f2f2" stroke-width="1.5"><path d="M1133.5 488 H1128.8 V503.4 H1146.4 V488 H1141.7"/><path d="M1137.6 480.2 V497.6 M1132.8 485 L1137.6 480.2 L1142.4 485"/></g><g fill="none" stroke="#f2f2f2" stroke-width="1.5"><rect x="170" y="538.6" width="15.8" height="15.8"/><path d="M173.8 546.5 H182"/></g><path d="M392 550.5 L399.2 543 L406.4 550.5" fill="none" stroke="#d8d8d8" stroke-width="1.4"/><path d="M178.9 602.3 L185.8 609.1999999999999 L192.7 602.3" fill="none" stroke="#cfcfcf" stroke-width="1.3"/><path d="M178.9 666.3 L185.8 673.1999999999999 L192.7 666.3" fill="none" stroke="#cfcfcf" stroke-width="1.3"/><ellipse cx="244.2" cy="637.1" rx="13.2" ry="10.2" fill="none" stroke="#f2f2f2" stroke-width="1.6"/><g fill="none" stroke="#f2f2f2" stroke-width="1.7" transform="translate(0 0.0)"><path d="M251.8 699 H231.2 V688.2 H251.8 V699 L256.5 704 L252.5 708.8"/><path d="M231.2 712.2 q3.3 -4.2 6.6 0 q3.3 -4.2 6.6 0 q3.3 -4.2 6.6 0 q3.3 -4.2 6.6 0"/></g><g fill="none" stroke="#f2f2f2" stroke-width="1.7" transform="translate(0 33.4)"><path d="M251.8 699 H231.2 V688.2 H251.8 V699 L256.5 704 L252.5 708.8"/><path d="M231.2 712.2 q3.3 -4.2 6.6 0 q3.3 -4.2 6.6 0 q3.3 -4.2 6.6 0 q3.3 -4.2 6.6 0"/></g><g fill="none" stroke="#f2f2f2" stroke-width="1.7" transform="translate(0 66.8)"><path d="M251.8 699 H231.2 V688.2 H251.8 V699 L256.5 704 L252.5 708.8"/><path d="M231.2 712.2 q3.3 -4.2 6.6 0 q3.3 -4.2 6.6 0 q3.3 -4.2 6.6 0 q3.3 -4.2 6.6 0"/></g><g fill="none" stroke="#f2f2f2" stroke-width="1.7" transform="translate(0 100.2)"><path d="M251.8 699 H231.2 V688.2 H251.8 V699 L256.5 704 L252.5 708.8"/><path d="M231.2 712.2 q3.3 -4.2 6.6 0 q3.3 -4.2 6.6 0 q3.3 -4.2 6.6 0 q3.3 -4.2 6.6 0"/></g><g fill="none" stroke="#f2f2f2" stroke-width="1.7" transform="translate(0 133.6)"><path d="M251.8 699 H231.2 V688.2 H251.8 V699 L256.5 704 L252.5 708.8"/><path d="M231.2 712.2 q3.3 -4.2 6.6 0 q3.3 -4.2 6.6 0 q3.3 -4.2 6.6 0 q3.3 -4.2 6.6 0"/></g><g fill="none" stroke="#f2f2f2" stroke-width="1.7" transform="translate(0 167.0)"><path d="M251.8 699 H231.2 V688.2 H251.8 V699 L256.5 704 L252.5 708.8"/><path d="M231.2 712.2 q3.3 -4.2 6.6 0 q3.3 -4.2 6.6 0 q3.3 -4.2 6.6 0 q3.3 -4.2 6.6 0"/></g></svg>

</div>
</body></html>
